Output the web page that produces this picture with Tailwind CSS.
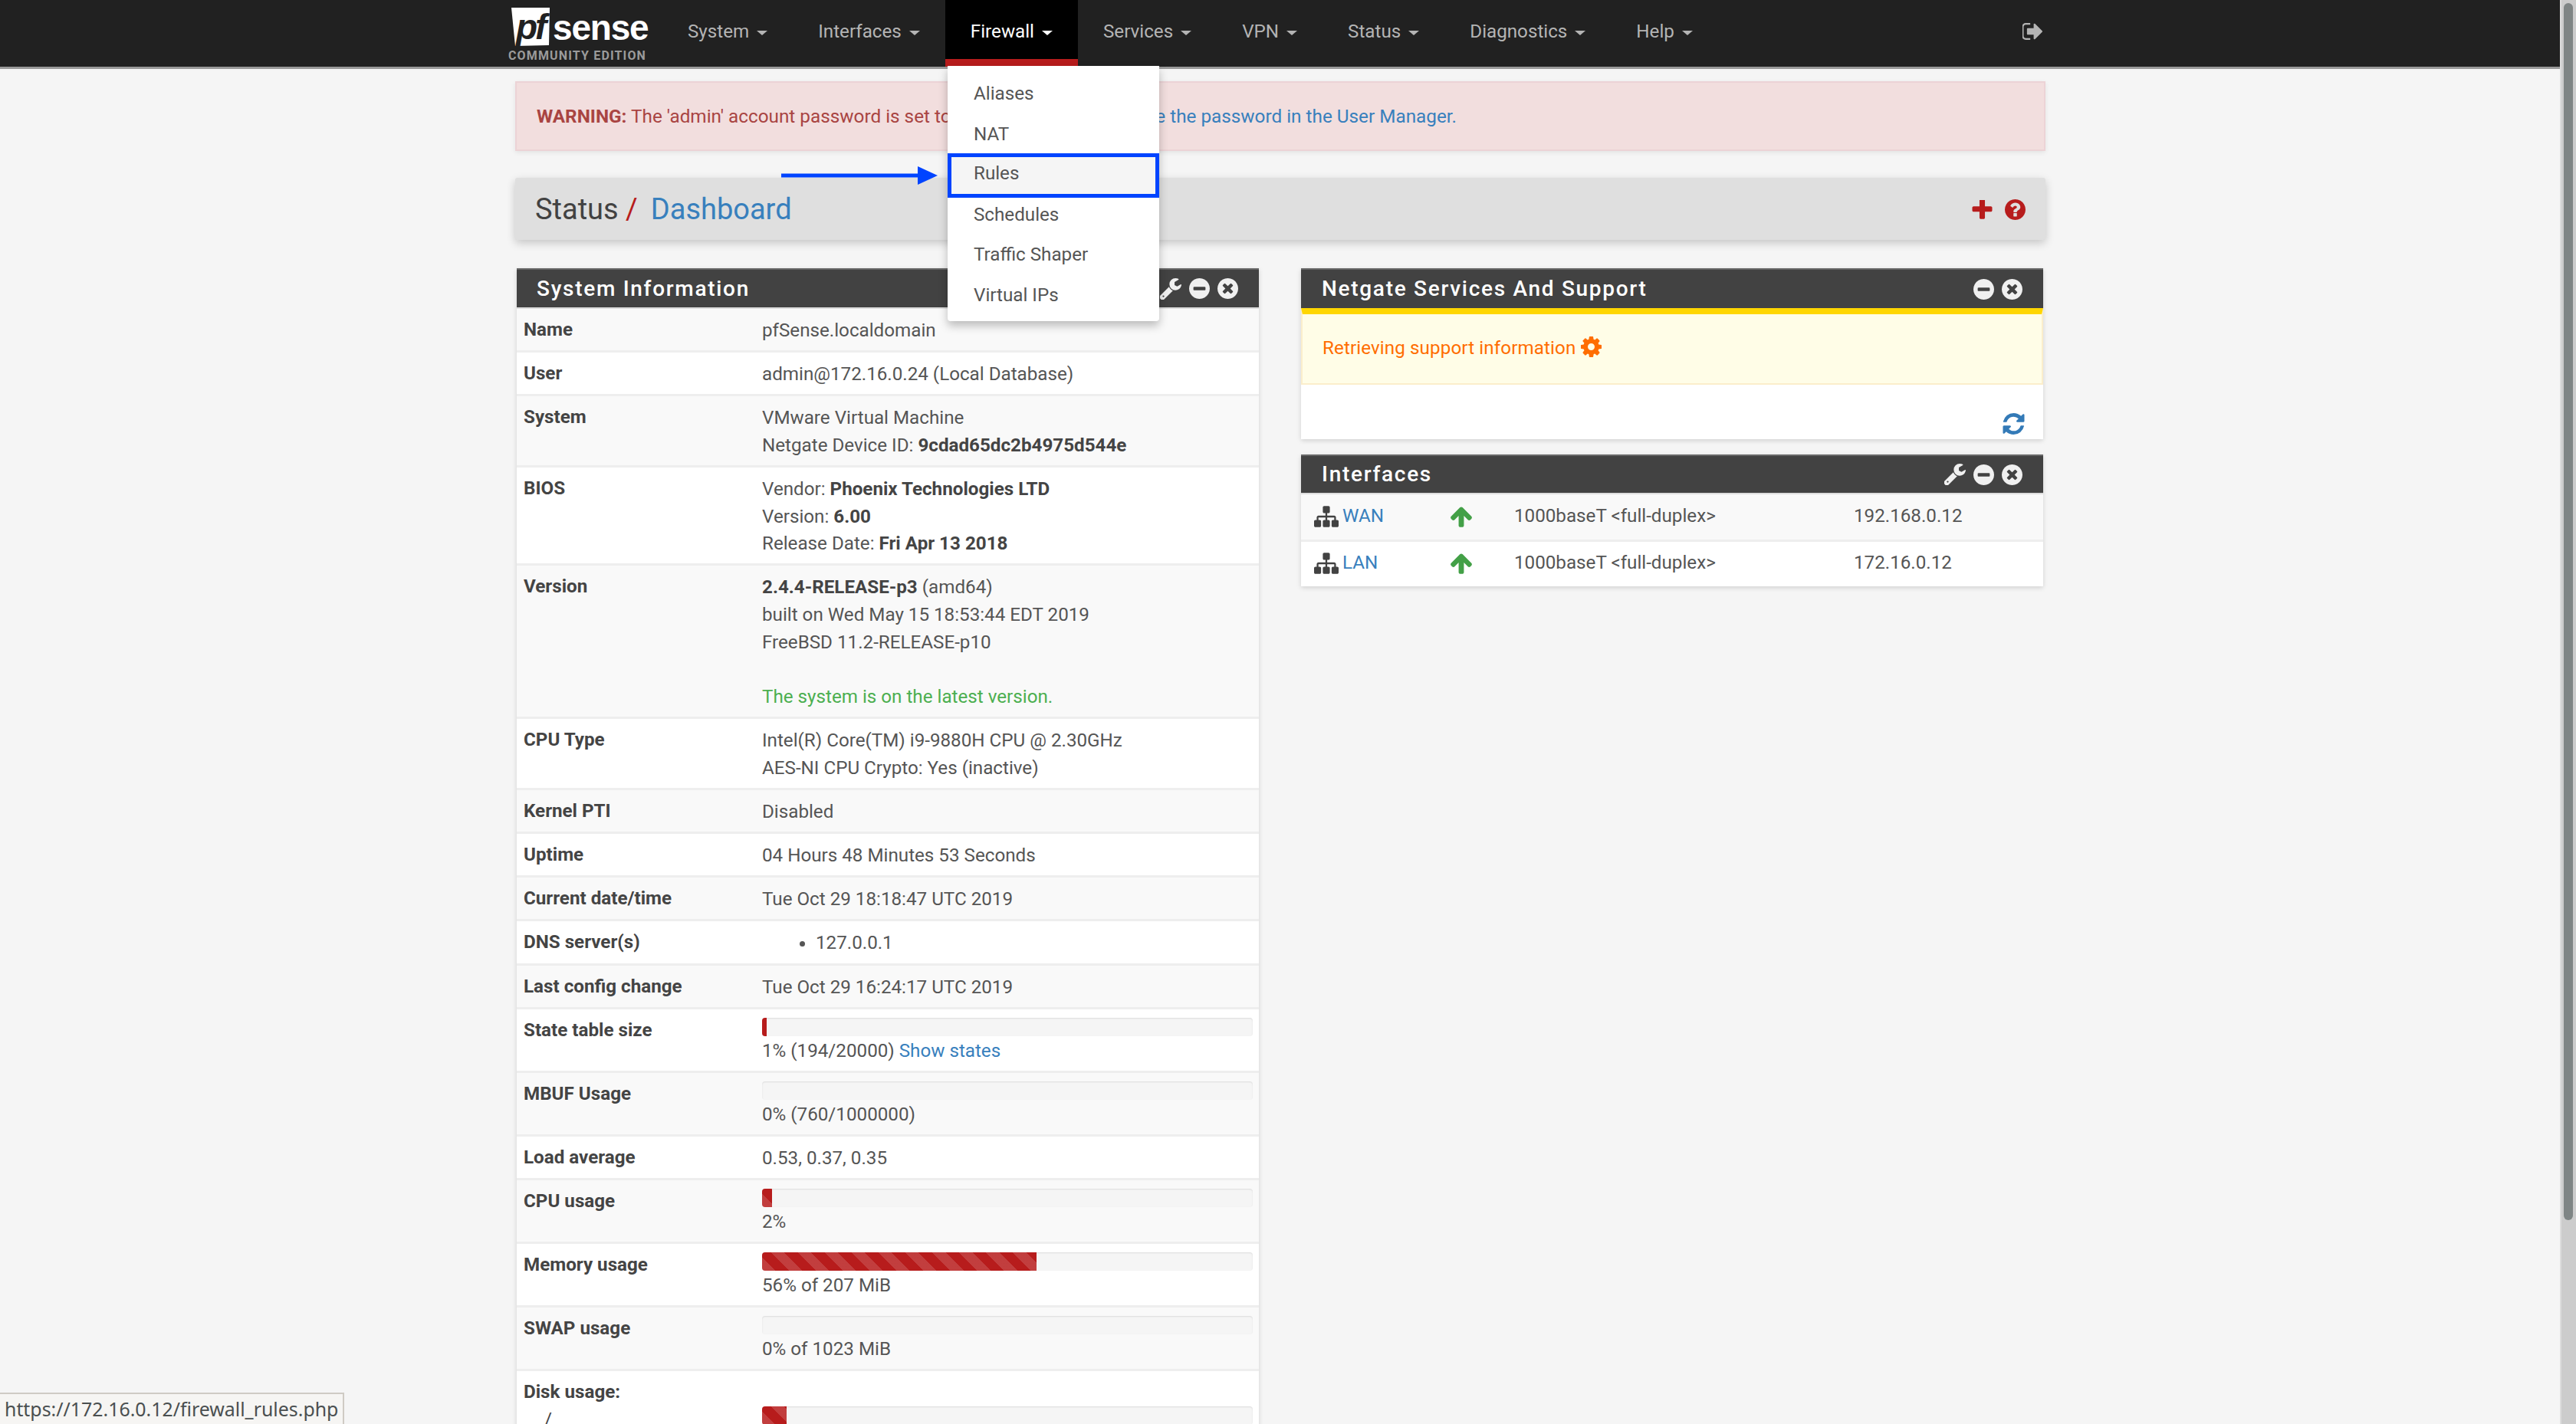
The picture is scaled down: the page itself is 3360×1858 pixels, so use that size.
<!doctype html>
<html>
<head>
<meta charset="utf-8">
<script src="https://cdn.jsdelivr.net/npm/@tailwindcss/browser@4"></script>
</head>
<body class="bg-[#f5f5f5] font-['Roboto',sans-serif] text-[24.2px] leading-[35.7px] text-[#555]">
<svg class="hidden">
  <symbol id="plus" viewBox="192 192 1408 1408"><path d="M1600 736v192q0 40-28 68t-68 28h-416v416q0 40-28 68t-68 28h-192q-40 0-68-28t-28-68v-416h-416q-40 0-68-28t-28-68v-192q0-40 28-68t68-28h416v-416q0-40 28-68t68-28h192q40 0 68 28t28 68v416h416q40 0 68 28t28 68z"/></symbol>
  <symbol id="question" viewBox="128 128 1536 1536"><path d="M1024 1376v-192q0-14-9-23t-23-9h-192q-14 0-23 9t-9 23v192q0 14 9 23t23 9h192q14 0 23-9t9-23zm256-672q0-88-55.5-163t-138.5-116-170-41q-243 0-371 213-15 24 8 42l132 100q7 6 19 6 16 0 25-12 53-68 86-92 34-24 86-24 48 0 85.5 26t37.5 59q0 38-20 61t-68 45q-63 28-115.5 86.5t-52.5 125.5v36q0 14 9 23t23 9h192q14 0 23-9t9-23q0-19 21.5-49.5t54.5-49.5q32-18 49-28.5t46-35 44.5-48 28-60.5 12.5-81zm384 192q0 209-103 385.5t-279.5 279.5-385.5 103-385.5-103-279.5-279.5-103-385.5 103-385.5 279.5-279.5 385.5-103 385.5 103 279.5 279.5 103 385.5z"/></symbol>
  <symbol id="minus" viewBox="128 128 1536 1536"><path d="M1344 960v-128q0-26-19-45t-45-19h-768q-26 0-45 19t-19 45v128q0 26 19 45t45 19h768q26 0 45-19t19-45zm320-64q0 209-103 385.5t-279.5 279.5-385.5 103-385.5-103-279.5-279.5-103-385.5 103-385.5 279.5-279.5 385.5-103 385.5 103 279.5 279.5 103 385.5z"/></symbol>
  <symbol id="times" viewBox="128 128 1536 1536"><path d="M1277 1122q0-26-19-45l-181-181 181-181q19-19 19-45 0-27-19-46l-90-90q-19-19-46-19-26 0-45 19l-181 181-181-181q-19-19-45-19-27 0-46 19l-90 90q-19 19-19 46 0 26 19 45l181 181-181 181q-19 19-19 45 0 27 19 46l90 90q19 19 46 19 26 0 45-19l181-181 181 181q19 19 45 19 27 0 46-19l90-90q19-19 19-46zm387-226q0 209-103 385.5t-279.5 279.5-385.5 103-385.5-103-279.5-279.5-103-385.5 103-385.5 279.5-279.5 385.5-103 385.5 103 279.5 279.5 103 385.5z"/></symbol>
  <symbol id="wrench" viewBox="128 128 1600 1600"><path d="M448 1472q0-26-19-45t-45-19-45 19-19 45 19 45 45 19 45-19 19-45zm644-420l-682 682q-37 37-90 37-52 0-91-37l-106-108q-38-36-38-90 0-53 38-91l681-681q39 98 114.5 173.5t173.5 114.5zm634-435q0 39-23 106-47 134-164.5 217.5t-258.5 83.5q-185 0-316.5-131.5t-131.5-316.5 131.5-316.5 316.5-131.5q58 0 121.5 16.5t107.5 46.5q16 11 16 28t-16 28l-293 169v224l193 107q5-3 79-48.5t135.5-81 70.5-35.5q15 0 23.5 10t8.5 25z"/></symbol>
  <symbol id="refresh" viewBox="128 128 1536 1536"><path d="M1639 1056q0 5-1 7-64 268-268 434.5t-478 166.5q-146 0-282.5-55t-243.5-157l-129 129q-19 19-45 19t-45-19-19-45v-448q0-26 19-45t45-19h448q26 0 45 19t19 45-19 45l-137 137q71 66 161 102t187 36q134 0 250-65t186-179q11-17 53-117 8-23 30-23h192q13 0 22.5 9.5t9.5 22.5zm25-800v448q0 26-19 45t-45 19h-448q-26 0-45-19t-19-45 19-45l138-138q-148-137-349-137-134 0-250 65t-186 179q-11 17-53 117-8 23-30 23h-199q-13 0-22.5-9.5t-9.5-22.5v-7q65-268 270-434.5t480-166.5q146 0 284 55.5t245 156.5l130-129q19-19 45-19t45 19 19 45z"/></symbol>
  <symbol id="sitemap" viewBox="0 128 1792 1536"><path d="M1792 1248v320q0 40-28 68t-68 28h-320q-40 0-68-28t-28-68v-320q0-40 28-68t68-28h96v-192h-512v192h96q40 0 68 28t28 68v320q0 40-28 68t-68 28h-320q-40 0-68-28t-28-68v-320q0-40 28-68t68-28h96v-192h-512v192h96q40 0 68 28t28 68v320q0 40-28 68t-68 28h-320q-40 0-68-28t-28-68v-320q0-40 28-68t68-28h96v-192q0-52 38-90t90-38h512v-192h-96q-40 0-68-28t-28-68v-320q0-40 28-68t68-28h320q40 0 68 28t28 68v320q0 40-28 68t-68 28h-96v192h512q52 0 90 38t38 90v192h96q40 0 68 28t28 68z"/></symbol>
  <symbol id="arrowup" viewBox="112 128 1568 1536"><path d="M1675 971q0 51-37 90l-75 75q-38 38-91 38-54 0-90-38l-294-293v704q0 52-37.5 84.5t-90.5 32.5h-128q-53 0-90.5-32.5t-37.5-84.5v-704l-294 293q-36 38-90 38t-90-38l-75-75q-38-38-38-90 0-53 38-91l651-651q35-37 90-37 54 0 91 37l651 651q37 39 37 91z"/></symbol>
  <symbol id="cog" viewBox="128 128 1536 1536"><path d="M1152 896q0-106-75-181t-181-75-181 75-75 181 75 181 181 75 181-75 75-181zm512-109v222q0 12-8 23t-20 13l-185 28q-19 54-39 91 35 50 107 138 10 12 10 25t-9 23q-27 37-99 108t-94 71q-12 0-26-9l-138-108q-44 23-91 38-16 136-29 186-7 28-36 28h-222q-14 0-24.5-8.5t-11.5-21.5l-28-184q-49-16-90-37l-141 107q-10 9-25 9-14 0-25-11-126-114-165-168-7-10-7-23 0-12 8-23 15-21 51-66.5t54-70.5q-27-50-41-99l-183-27q-13-2-21-12.5t-8-23.5v-222q0-12 8-23t19-13l186-28q14-46 39-92-40-57-107-138-10-12-10-24 0-10 9-23 26-36 98.5-107.5t94.5-71.5q13 0 26 10l138 107q44-23 91-38 16-136 29-186 7-28 36-28h222q14 0 24.5 8.5t11.5 21.5l28 184q49 16 90 37l142-107q9-9 24-9 13 0 25 10 129 119 165 170 7 8 7 22 0 12-8 23-15 21-51 66.5t-54 70.5q26 50 41 98l183 28q13 2 21 12.5t8 23.5z"/></symbol>
  <symbol id="signout" viewBox="128 192 1536 1408"><path d="M704 1440q0 4 1 20t.5 26.5-3 23.5-10 19.5-20.5 6.5h-320q-119 0-203.5-84.5t-84.5-203.5v-704q0-119 84.5-203.5t203.5-84.5h320q13 0 22.5 9.5t9.5 22.5q0 4 1 20t.5 26.5-3 23.5-10 19.5-20.5 6.5h-320q-66 0-113 47t-47 113v704q0 66 47 113t113 47h312l11.5 1 11.5 3 8 5.5 7 9 2 13.5zm928-544q0 26-19 45l-544 544q-19 19-45 19t-45-19-19-45v-288h-448q-26 0-45-19t-19-45v-384q0-26 19-45t45-19h448v-288q0-26 19-45t45-19 45 19l544 544q19 19 19 45z"/></symbol>
</svg>

<div class="relative flex h-[1858px] w-[3360px] overflow-hidden">
  <div class="w-[3339px] shrink-0">
    <!-- navbar -->
    <header class="relative flex h-[90px] items-start border-b-[3px] border-[#9a9a9a] bg-[#212121]">
      <a class="relative ml-[663px] block h-[87px] w-[201px] shrink-0">
        <svg class="absolute left-[4px] top-[10px] h-[50px] w-[50px]" viewBox="0 0 50 50"><polygon points="0,0 50,0 49,49 5,50" fill="#fff"/></svg>
        <span class="absolute left-[10px] top-[10px] font-['Liberation_Sans',sans-serif] text-[46px] font-bold italic leading-[50px] tracking-[-3px] text-[#212121]">pf</span>
        <span class="absolute left-[58px] top-[11px] font-['Liberation_Sans',sans-serif] text-[46px] font-bold leading-[50px] tracking-[-1.2px] text-white">sense</span>
        <span class="absolute left-0 top-[62px] whitespace-nowrap text-[16px] font-bold leading-[22px] tracking-[1.15px] text-[#9b9b9b]">COMMUNITY EDITION</span>
      </a>
      <nav class="flex h-[87px] text-[#b4b4b4]">
        <a class="flex h-[87px] items-start gap-[10px] px-[33px] pt-[24px]">System<i class="mt-[16px] block h-0 w-0 border-x-[7px] border-t-[6px] border-x-transparent border-t-[#b4b4b4]"></i></a>
        <a class="flex h-[87px] items-start gap-[10px] px-[33px] pt-[24px]">Interfaces<i class="mt-[16px] block h-0 w-0 border-x-[7px] border-t-[6px] border-x-transparent border-t-[#b4b4b4]"></i></a>
        <a class="flex h-[87px] items-start gap-[10px] border-b-[10px] border-[#b71c1c] bg-black px-[33px] pt-[24px] text-white">Firewall<i class="mt-[16px] block h-0 w-0 border-x-[7px] border-t-[6px] border-x-transparent border-t-white"></i></a>
        <a class="flex h-[87px] items-start gap-[10px] px-[33px] pt-[24px]">Services<i class="mt-[16px] block h-0 w-0 border-x-[7px] border-t-[6px] border-x-transparent border-t-[#b4b4b4]"></i></a>
        <a class="flex h-[87px] items-start gap-[10px] px-[33px] pt-[24px]">VPN<i class="mt-[16px] block h-0 w-0 border-x-[7px] border-t-[6px] border-x-transparent border-t-[#b4b4b4]"></i></a>
        <a class="flex h-[87px] items-start gap-[10px] px-[33px] pt-[24px]">Status<i class="mt-[16px] block h-0 w-0 border-x-[7px] border-t-[6px] border-x-transparent border-t-[#b4b4b4]"></i></a>
        <a class="flex h-[87px] items-start gap-[10px] px-[33px] pt-[24px]">Diagnostics<i class="mt-[16px] block h-0 w-0 border-x-[7px] border-t-[6px] border-x-transparent border-t-[#b4b4b4]"></i></a>
        <a class="flex h-[87px] items-start gap-[10px] px-[33px] pt-[24px]">Help<i class="mt-[16px] block h-0 w-0 border-x-[7px] border-t-[6px] border-x-transparent border-t-[#b4b4b4]"></i></a>
      </nav>
      <svg class="absolute left-[2638px] top-[29px] h-[24px] w-[27px] fill-[#b4b4b4]"><use href="#signout"/></svg>
    </header>

    <main class="ml-[672px] w-[1996px]">
      <div class="mt-[16px] flex h-[91px] items-center border-2 border-[#ecd3d6] bg-[#f2dede] px-[26px] text-[24.3px] text-[#a94442] shadow-[0_2px_6px_rgba(0,0,0,0.08)]">
        <p class="whitespace-nowrap"><b class="font-bold">WARNING:</b> The 'admin' account password is set to the default value. <a class="text-[#3880bd]">Change the password in the User Manager.</a></p>
      </div>
      <div class="mt-[35px] flex h-[81px] items-center justify-between rounded-[3px] bg-[#dfdfdf] pl-[26px] pr-[26px] shadow-[0_4px_12px_rgba(0,0,0,0.2)]">
        <h1 class="text-[38px] leading-[44px] text-[#424242]">Status <span class="text-[#b71c1c]">/</span><a class="ml-[17px] text-[#3880bd]">Dashboard</a></h1>
        <div class="mt-[2px] flex items-center gap-[16px]">
          <svg class="h-[26px] w-[27px] fill-[#b71c1c]"><use href="#plus"/></svg>
          <svg class="h-[27px] w-[27px] fill-[#b71c1c]"><use href="#question"/></svg>
        </div>
      </div>

      <div class="mt-[37px] grid grid-cols-[968px_968px] gap-x-[55px] px-[2px]">
        <!-- left -->
        <section class="bg-white shadow-[0_2px_6px_rgba(0,0,0,0.15)]">
          <div class="flex h-[53px] items-center justify-between border-b-[2px] border-t-[2px] border-b-[#ddd] border-t-[#666] bg-[#424242] pl-[26px] pr-[27px] text-[28px] font-medium tracking-[1.7px] text-white">
            <span>System Information</span>
            <span class="flex items-center gap-[10px]">
              <svg class="h-[28px] w-[28px] fill-[#f0f0f0]"><use href="#wrench"/></svg>
              <svg class="h-[27px] w-[27px] fill-[#f0f0f0]"><use href="#minus"/></svg>
              <svg class="h-[27px] w-[27px] fill-[#f0f0f0]"><use href="#times"/></svg>
            </span>
          </div>
          <div class="[&>div]:flex [&>div]:border-b-[3px] [&>div]:border-[#eee] [&>div]:pb-[7.4px] [&>div]:pl-[9px] [&>div]:pr-[8px] [&>div]:pt-[11px] [&>div:nth-child(odd)]:bg-[#f9f9f9] [&>div:nth-child(even)]:bg-white [&_b.l]:w-[311px] [&_b.l]:shrink-0 [&_b.l]:-mt-[1px] [&_b]:font-bold [&_b]:text-[#444]">
            <div><b class="l">Name</b><span>pfSense.localdomain</span></div>
            <div><b class="l">User</b><span>admin@172.16.0.24 (Local Database)</span></div>
            <div><b class="l">System</b><span>VMware Virtual Machine<br>Netgate Device ID: <b>9cdad65dc2b4975d544e</b></span></div>
            <div><b class="l">BIOS</b><span>Vendor: <b>Phoenix Technologies LTD</b><br>Version: <b>6.00</b><br>Release Date: <b>Fri Apr 13 2018</b></span></div>
            <div><b class="l">Version</b><span><b>2.4.4-RELEASE-p3</b> (amd64)<br>built on Wed May 15 18:53:44 EDT 2019<br>FreeBSD 11.2-RELEASE-p10<br><br><span class="text-[#4caf50]">The system is on the latest version.</span></span></div>
            <div><b class="l">CPU Type</b><span>Intel(R) Core(TM) i9-9880H CPU @ 2.30GHz<br>AES-NI CPU Crypto: Yes (inactive)</span></div>
            <div><b class="l">Kernel PTI</b><span>Disabled</span></div>
            <div><b class="l">Uptime</b><span>04 Hours 48 Minutes 53 Seconds</span></div>
            <div><b class="l">Current date/time</b><span>Tue Oct 29 18:18:47 UTC 2019</span></div>
            <div><b class="l">DNS server(s)</b><ul class="list-disc pl-[70px]"><li>127.0.0.1</li></ul></div>
            <div><b class="l">Last config change</b><span>Tue Oct 29 16:24:17 UTC 2019</span></div>
            <div><b class="l">State table size</b><div class="flex-1"><div class="mb-[2px] h-[24px] rounded-[4px] bg-[#f5f5f5] shadow-[inset_0_1px_2px_rgba(0,0,0,0.1)]"><div class="h-full w-[1%] rounded-l-[4px] bg-[#b71c1c]"></div></div>1% (194/20000) <a class="text-[#3880bd]">Show states</a></div></div>
            <div><b class="l">MBUF Usage</b><div class="flex-1"><div class="mb-[2px] h-[24px] rounded-[4px] bg-[#f5f5f5] shadow-[inset_0_1px_2px_rgba(0,0,0,0.1)]"></div>0% (760/1000000)</div></div>
            <div><b class="l">Load average</b><span>0.53, 0.37, 0.35</span></div>
            <div><b class="l">CPU usage</b><div class="flex-1"><div class="mb-[2px] h-[24px] rounded-[4px] bg-[#f5f5f5] shadow-[inset_0_1px_2px_rgba(0,0,0,0.1)]"><div class="h-full w-[2%] rounded-l-[4px] bg-[#b71c1c] bg-[repeating-linear-gradient(45deg,rgba(255,255,255,0.15)_0,rgba(255,255,255,0.15)_12.4px,transparent_12.4px,transparent_24.8px)]"></div></div>2%</div></div>
            <div><b class="l">Memory usage</b><div class="flex-1"><div class="mb-[2px] h-[24px] rounded-[4px] bg-[#f5f5f5] shadow-[inset_0_1px_2px_rgba(0,0,0,0.1)]"><div class="h-full w-[56%] rounded-l-[4px] bg-[#b71c1c] bg-[repeating-linear-gradient(45deg,rgba(255,255,255,0.15)_0,rgba(255,255,255,0.15)_12.4px,transparent_12.4px,transparent_24.8px)]"></div></div>56% of 207 MiB</div></div>
            <div><b class="l">SWAP usage</b><div class="flex-1"><div class="mb-[2px] h-[24px] rounded-[4px] bg-[#f5f5f5] shadow-[inset_0_1px_2px_rgba(0,0,0,0.1)]"></div>0% of 1023 MiB</div></div>
            <div><b class="l">Disk usage:<br><span class="ml-[27px] font-normal">/</span></b><div class="flex-1 pt-[35px]"><div class="h-[24px] rounded-[4px] bg-[#f5f5f5] shadow-[inset_0_1px_2px_rgba(0,0,0,0.1)]"><div class="h-full w-[5%] rounded-l-[4px] bg-[#b71c1c] bg-[repeating-linear-gradient(45deg,rgba(255,255,255,0.15)_0,rgba(255,255,255,0.15)_12.4px,transparent_12.4px,transparent_24.8px)]"></div></div></div></div>
          </div>
        </section>
        <!-- right -->
        <div class="flex flex-col gap-[20px]">
          <section class="bg-white shadow-[0_2px_6px_rgba(0,0,0,0.15)]">
            <div class="flex h-[52px] items-center justify-between border-t-[2px] border-t-[#666] bg-[#424242] pl-[27px] pr-[27px] text-[28px] font-medium tracking-[1.7px] text-white">
              <span>Netgate Services And Support</span>
              <span class="flex items-center gap-[10px]">
                <svg class="h-[27px] w-[27px] fill-[#f0f0f0]"><use href="#minus"/></svg>
                <svg class="h-[27px] w-[27px] fill-[#f0f0f0]"><use href="#times"/></svg>
              </span>
            </div>
            <div class="flex h-[100px] items-center border-b-2 border-x-2 border-t-[8px] border-x-[#fbeecb] border-b-[#fbeecb] border-t-[#ffd600] bg-[#fffde7] pl-[26px] text-[#ff6d00]">
              <span class="tracking-[0.1px]">Retrieving support information</span>
              <svg class="-mt-[6px] ml-[7px] h-[27px] w-[27px] fill-[#ff6d00]"><use href="#cog"/></svg>
            </div>
            <div class="flex h-[71px] justify-end pr-[24px] pt-[37px]">
              <svg class="h-[28px] w-[29px] fill-[#337ab7]"><use href="#refresh"/></svg>
            </div>
          </section>
          <section class="bg-white shadow-[0_2px_6px_rgba(0,0,0,0.15)]">
            <div class="flex h-[50px] items-center justify-between border-t-[2px] border-t-[#666] bg-[#424242] pl-[27px] pr-[27px] text-[28px] font-medium tracking-[1.7px] text-white">
              <span>Interfaces</span>
              <span class="flex items-center gap-[10px]">
                <svg class="h-[28px] w-[28px] fill-[#f0f0f0]"><use href="#wrench"/></svg>
                <svg class="h-[27px] w-[27px] fill-[#f0f0f0]"><use href="#minus"/></svg>
                <svg class="h-[27px] w-[27px] fill-[#f0f0f0]"><use href="#times"/></svg>
              </span>
            </div>
            <div class="border-t-[2px] border-[#ddd]">
              <div class="grid h-[62px] grid-cols-[37px_141px_83px_443px_1fr] items-center border-b-[3px] border-[#eee] bg-[#f9f9f9] pb-[1px] pl-[17px]">
                <svg class="h-[28px] w-[32px] fill-[#424242]"><use href="#sitemap"/></svg><a class="text-[#3880bd]">WAN</a><svg class="h-[28px] w-[28px] fill-[#43a047]"><use href="#arrowup"/></svg><span>1000baseT &lt;full-duplex&gt;</span><span>192.168.0.12</span>
              </div>
              <div class="grid h-[58px] grid-cols-[37px_141px_83px_443px_1fr] items-center bg-white pb-[2px] pl-[17px]">
                <svg class="h-[28px] w-[32px] fill-[#424242]"><use href="#sitemap"/></svg><a class="text-[#3880bd]">LAN</a><svg class="h-[28px] w-[28px] fill-[#43a047]"><use href="#arrowup"/></svg><span>1000baseT &lt;full-duplex&gt;</span><span>172.16.0.12</span>
              </div>
            </div>
          </section>
        </div>
      </div>
    </main>
  </div>

  <!-- scrollbar -->
  <div class="h-full w-[21px] border-l-2 border-[#ddd] bg-[#cccccc] pl-[3px] pt-[4px]">
    <div class="h-[1588px] w-[12px] rounded-full bg-[#7f8585]"></div>
  </div>

  <!-- Firewall dropdown -->
  <div class="absolute left-[1236px] top-[86px] h-[333px] w-[276px] rounded-b-[4px] bg-white pt-[10px] text-[#555] shadow-[0_6px_12px_rgba(0,0,0,0.25)]">
    <a class="block h-[52.5px] pl-[34px] leading-[52px]">Aliases</a>
    <a class="block h-[52.5px] pl-[34px] leading-[52px]">NAT</a>
    <a class="block h-[52.5px] pl-[34px] leading-[52px]">Rules</a>
    <a class="block h-[52.5px] pl-[34px] leading-[52px]">Schedules</a>
    <a class="block h-[52.5px] pl-[34px] leading-[52px]">Traffic Shaper</a>
    <a class="block h-[52.5px] pl-[34px] leading-[52px]">Virtual IPs</a>
  </div>
  <!-- annotation highlight -->
  <div class="absolute left-[1236px] top-[200px] h-[58px] w-[276px] border-[5px] border-[#0044ff] bg-[#f5f5f5] pl-[29px] leading-[43px] text-[#555]">Rules</div>
  <svg class="absolute left-[1019px] top-[215px] h-[28px] w-[205px]" viewBox="0 0 205 28"><rect x="0" y="11.5" width="180" height="5" fill="#0044ff"/><polygon points="178,2 204,14 178,26" fill="#0044ff"/></svg>

  <!-- link status bubble -->
  <div class="absolute bottom-0 left-0 flex h-[41px] w-[449px] items-center border-r-2 border-t-2 border-[#cfcbc4] bg-[#f6f5f3] pl-[6px] font-['Noto_Sans',sans-serif] text-[24.9px] text-[#4a4f50]">https://172.16.0.12/firewall_rules.php</div>
</div>
</body>
</html>
